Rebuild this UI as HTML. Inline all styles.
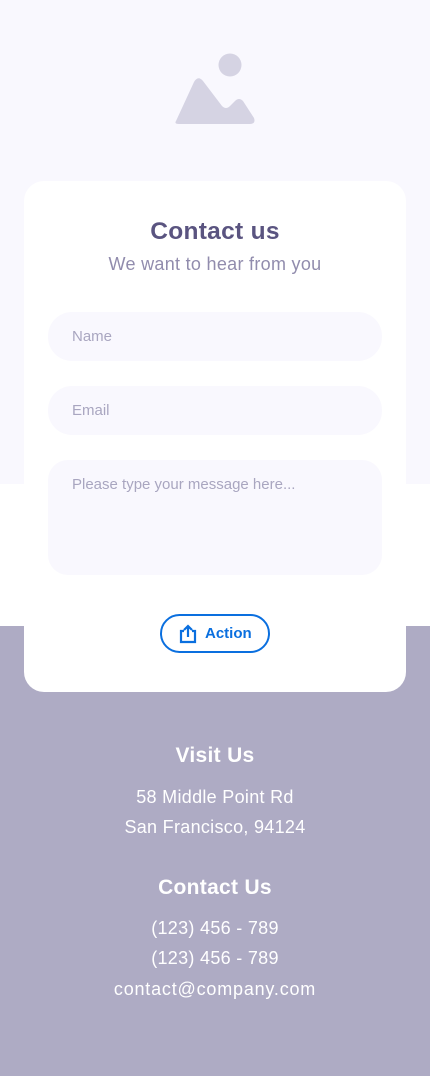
<!DOCTYPE html>
<html><head><style>
*{margin:0;padding:0;box-sizing:border-box}
body{width:430px;height:1077px;position:relative;font-family:"Liberation Sans",sans-serif;background:#fff;overflow:hidden}
.top{position:absolute;left:0;top:0;width:430px;height:484px;background:#f9f8fe}
.bot{position:absolute;left:0;top:626px;width:430px;height:450px;background:#aeabc4}
.card{position:absolute;left:24px;top:181px;width:382px;height:511px;background:#fff;border-radius:20px}
h1{position:absolute;top:218px;width:430px;text-align:center;font-size:24.5px;color:#5a5480;font-weight:bold;letter-spacing:0.3px}
.sub{position:absolute;top:254px;width:430px;text-align:center;font-size:18px;color:#918cad;letter-spacing:0.3px}
.in{position:absolute;left:48px;width:334px;background:#f9f8fe;border-radius:24px;color:#a9a6c0;font-size:15px;padding-left:24px}
.btn{position:absolute;left:160px;top:614px;width:110px;height:39px;border:2px solid #0a6fdf;border-radius:20px;color:#0a6fdf;font-weight:bold;font-size:15px}
.w{position:absolute;width:430px;text-align:center;color:#fff;letter-spacing:0.3px}
.f{font-size:18px}
</style></head><body>
<div class="top"></div><div class="bot"></div>
<svg style="position:absolute;left:0;top:0" width="430" height="140">
<circle cx="230" cy="65" r="11.5" fill="#d5d3e3"/>
<path d="M176 121 L194 82 Q198 75 203 81 L222 106 Q226 110 230 106 L235 101 Q239 97 243 101 L254 118 Q256 124 250 124 L179 124 Q174 124 176 121Z" fill="#d5d3e3"/>
</svg>
<div class="card"></div>
<h1>Contact us</h1>
<div class="sub">We want to hear from you</div>
<div class="in" style="top:312px;height:49px;line-height:49px">Name</div>
<div class="in" style="top:386px;height:49px;line-height:49px">Email</div>
<div class="in" style="top:460px;height:115px;padding-top:16px;border-radius:20px">Please type your message here...</div>
<div class="btn"><svg style="position:absolute;left:16px;top:8px" width="20" height="20" viewBox="0 0 20 20" fill="none" stroke="#0a6fdf" stroke-width="2.2"><path d="M6 7H3v11h14V7h-3M10 13V2M6 6l4-4 4 4"/></svg><span style="position:absolute;left:43px;top:9px">Action</span></div>
<div class="w" style="top:744px;font-size:21px;font-weight:bold">Visit Us</div>
<div class="w f" style="top:787px">58 Middle Point Rd</div>
<div class="w f" style="top:817px">San Francisco, 94124</div>
<div class="w" style="top:876px;font-size:21px;font-weight:bold">Contact Us</div>
<div class="w f" style="top:918px">(123) 456 - 789</div>
<div class="w f" style="top:948px">(123) 456 - 789</div>
<div class="w f" style="top:979px;letter-spacing:0.8px">contact@company.com</div>
</body></html>
